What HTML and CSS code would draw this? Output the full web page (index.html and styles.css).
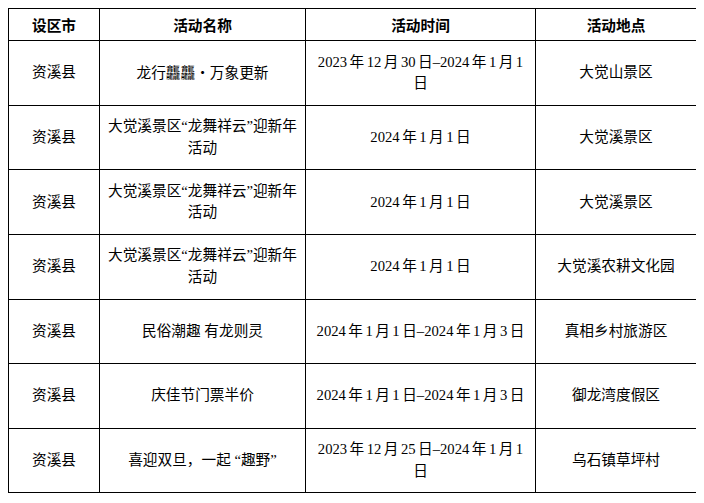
FILE: index.html
```html
<!DOCTYPE html>
<html lang="zh-CN">
<head>
<meta charset="utf-8">
<title>活动列表</title>
<link rel="stylesheet" href="styles.css">
</head>
<body>
<table class="events">
  <colgroup>
    <col class="c-city">
    <col class="c-name">
    <col class="c-time">
    <col class="c-place">
  </colgroup>
  <thead>
    <tr class="head">
      <th>设区市</th>
      <th>活动名称</th>
      <th>活动时间</th>
      <th>活动地点</th>
    </tr>
  </thead>
  <tbody>
    <tr>
      <td>资溪县</td>
      <td>龙行龘龘<span class="cjk">・</span>万象更新</td>
      <td class="time">2023 年 12 月 30 日–2024 年 1 月 1<br>日</td>
      <td>大觉山景区</td>
    </tr>
    <tr>
      <td>资溪县</td>
      <td>大觉溪景区“龙舞祥云”迎新年<br>活动</td>
      <td class="time">2024 年 1 月 1 日</td>
      <td>大觉溪景区</td>
    </tr>
    <tr>
      <td>资溪县</td>
      <td>大觉溪景区“龙舞祥云”迎新年<br>活动</td>
      <td class="time">2024 年 1 月 1 日</td>
      <td>大觉溪景区</td>
    </tr>
    <tr>
      <td>资溪县</td>
      <td>大觉溪景区“龙舞祥云”迎新年<br>活动</td>
      <td class="time">2024 年 1 月 1 日</td>
      <td>大觉溪农耕文化园</td>
    </tr>
    <tr>
      <td>资溪县</td>
      <td>民俗潮趣 有龙则灵</td>
      <td class="time">2024 年 1 月 1 日–2024 年 1 月 3 日</td>
      <td>真相乡村旅游区</td>
    </tr>
    <tr>
      <td>资溪县</td>
      <td>庆佳节门票半价</td>
      <td class="time">2024 年 1 月 1 日–2024 年 1 月 3 日</td>
      <td>御龙湾度假区</td>
    </tr>
    <tr>
      <td>资溪县</td>
      <td>喜迎双旦，一起 “趣野”</td>
      <td class="time">2023 年 12 月 25 日–2024 年 1 月 1<br>日</td>
      <td>乌石镇草坪村</td>
    </tr>
  </tbody>
</table>
</body>
</html>
```
FILE: styles.css
```css
html, body {
  background: #ffffff;
}
body {
  margin: 8px;
  font-family: "Liberation Serif", "Noto Sans CJK SC", serif;
  font-size: 14.67px;
  color: #000000;
}
.events {
  border-collapse: collapse;
  table-layout: fixed;
  width: 688px;
}
.c-city { width: 91px; }
.c-name { width: 206px; }
.c-time { width: 230px; }
.c-place { width: 161px; }
.events th,
.events td {
  border: 1px solid #000000;
  padding: 0 7px;
  text-align: center;
  vertical-align: middle;
  line-height: 21.5px;
  font-weight: normal;
  white-space: nowrap;
}
.events th {
  font-weight: bold;
  font-family: "Noto Sans CJK SC", sans-serif;
}
.events td.time {
  padding: 0;
  word-spacing: -1.2px;
}
.events tr.head {
  height: 32.3px;
}
.events tbody tr {
  height: 64.6px;
}
.cjk {
  font-family: "Noto Sans CJK SC", sans-serif;
}
```
